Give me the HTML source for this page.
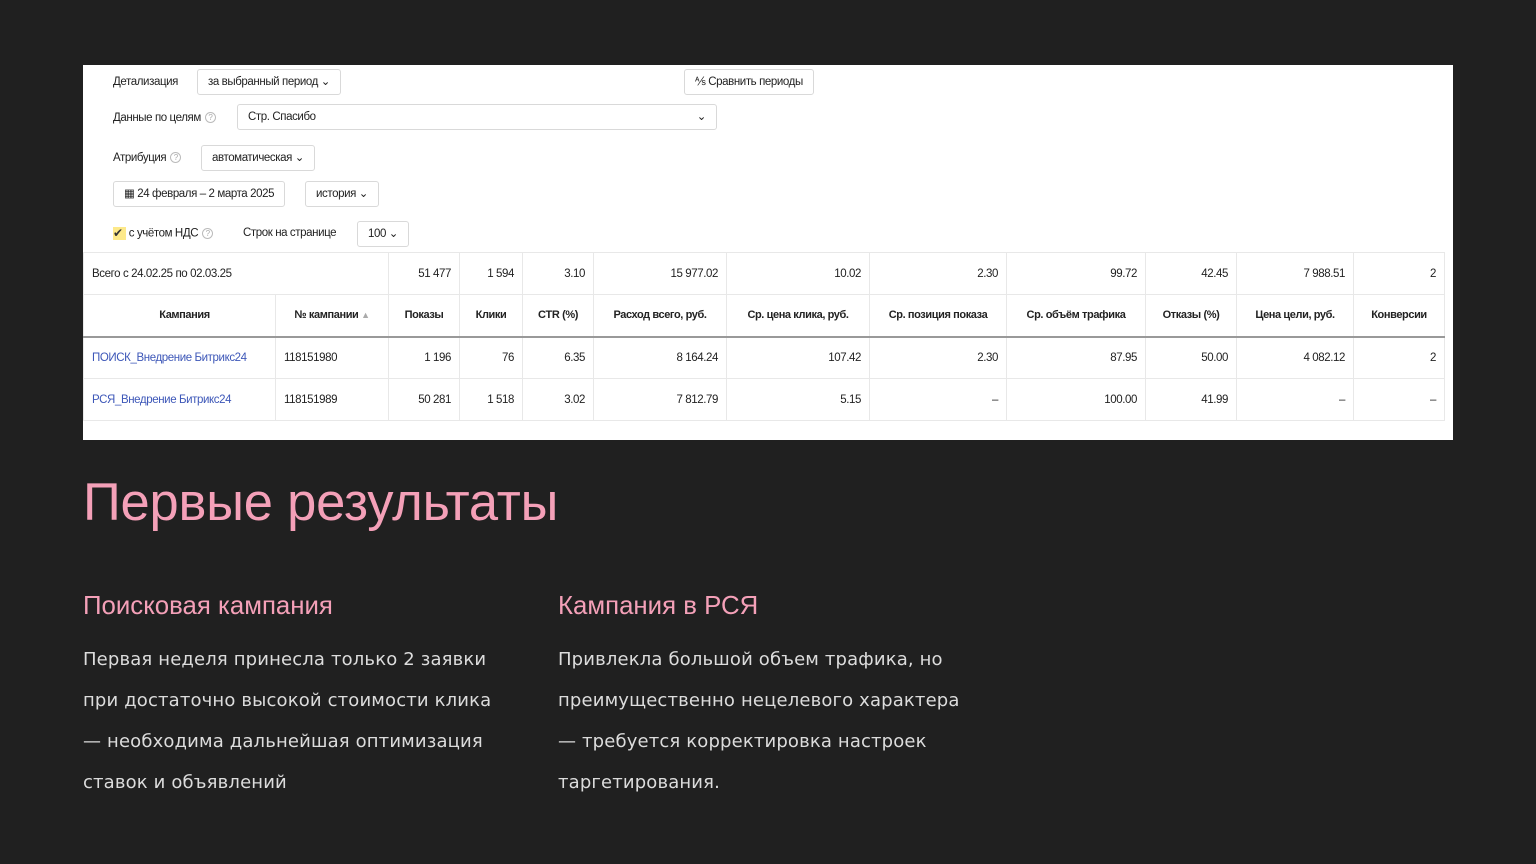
<!DOCTYPE html>
<html><head><meta charset="utf-8"><style>
*{margin:0;padding:0;box-sizing:border-box}
body{width:1536px;height:864px;background:#202020;position:relative;overflow:hidden;font-family:"Liberation Sans",sans-serif}
.shot{position:absolute;left:83px;top:65px;width:1370px;height:375px;background:#fff;font-family:"Liberation Sans",sans-serif;font-size:11.5px;letter-spacing:-0.4px;color:#222}
.a{position:absolute;white-space:nowrap}
.btn{position:absolute;border:1px solid #d9d9d9;border-radius:3px;height:26px;line-height:24px;padding:0 10px;white-space:nowrap;background:#fff}
.q{display:inline-block;width:11px;height:11px;border:1px solid #bbb;border-radius:50%;font-size:8px;line-height:9px;text-align:center;color:#aaa;vertical-align:middle;margin-left:4px}
table{position:absolute;left:0;top:187px;width:1361px;border-collapse:collapse;table-layout:fixed}
td{border:1px solid #e8e8e8;height:42px;padding:0 8px;text-align:right;white-space:nowrap;overflow:hidden}
tr.h td{font-weight:bold;text-align:center;border-bottom:2px solid #999;font-size:11px}
td.l{text-align:left}
.lnk{color:#3d57b8}
h1{position:absolute;left:83px;top:472px;font-weight:normal;font-size:52.5px;color:#f4a0b8;letter-spacing:-0.2px}
h2{position:absolute;top:592px;font-weight:normal;font-size:25.8px;color:#f4a0b8}
p{position:absolute;top:639px;font-family:"DejaVu Sans",sans-serif;font-size:18px;line-height:41px;color:#dcdcdc;letter-spacing:0.15px;white-space:nowrap}
</style></head><body>
<div class="shot">
 <div class="a" style="left:30px;top:11px">Детализация</div>
 <div class="btn" style="left:114px;top:4px">за выбранный период ⌄</div>
 <div class="btn" style="left:601px;top:4px">⅍ Сравнить периоды</div>
 <div class="a" style="left:30px;top:47px">Данные по целям<span class="q">?</span></div>
 <div class="btn" style="left:154px;top:39px;width:480px">Стр. Спасибо<span style="position:absolute;right:10px">⌄</span></div>
 <div class="a" style="left:30px;top:87px">Атрибуция<span class="q">?</span></div>
 <div class="btn" style="left:118px;top:80px">автоматическая ⌄</div>
 <div class="btn" style="left:30px;top:116px">▦ 24 февраля – 2 марта 2025</div>
 <div class="btn" style="left:222px;top:116px">история ⌄</div>
 <div class="a" style="left:30px;top:162px"><span style="display:inline-block;width:13px;height:13px;background:#fde98a;color:#333;font-size:12px;line-height:12px;vertical-align:middle">✔</span> с учётом НДС<span class="q">?</span></div>
 <div class="a" style="left:160px;top:162px">Строк на странице</div>
 <div class="btn" style="left:274px;top:156px">100 ⌄</div>
 <table>
  <colgroup><col style="width:192px"><col style="width:113px"><col style="width:71px"><col style="width:63px"><col style="width:71px"><col style="width:133px"><col style="width:143px"><col style="width:137px"><col style="width:139px"><col style="width:91px"><col style="width:117px"><col style="width:91px"></colgroup>
  <tr><td class="l" colspan="2">Всего с 24.02.25 по 02.03.25</td><td>51 477</td><td>1 594</td><td>3.10</td><td>15 977.02</td><td>10.02</td><td>2.30</td><td>99.72</td><td>42.45</td><td>7 988.51</td><td>2</td></tr>
  <tr class="h"><td class="l" style="padding-left:18px">Кампания</td><td>№ кампании <span style="color:#aaa;font-size:9px">▲</span></td><td>Показы</td><td>Клики</td><td>CTR (%)</td><td>Расход всего, руб.</td><td>Ср. цена клика, руб.</td><td>Ср. позиция показа</td><td>Ср. объём трафика</td><td>Отказы (%)</td><td>Цена цели, руб.</td><td>Конверсии</td></tr>
  <tr><td class="l lnk">ПОИСК_Внедрение Битрикс24</td><td class="l">118151980</td><td>1 196</td><td>76</td><td>6.35</td><td>8 164.24</td><td>107.42</td><td>2.30</td><td>87.95</td><td>50.00</td><td>4 082.12</td><td>2</td></tr>
  <tr><td class="l lnk">РСЯ_Внедрение Битрикс24</td><td class="l">118151989</td><td>50 281</td><td>1 518</td><td>3.02</td><td>7 812.79</td><td>5.15</td><td>–</td><td>100.00</td><td>41.99</td><td>–</td><td>–</td></tr>
 </table>
</div>
<h1>Первые результаты</h1>
<h2 style="left:83px">Поисковая кампания</h2>
<h2 style="left:558px">Кампания в РСЯ</h2>
<p style="left:83px">Первая неделя принесла только 2 заявки<br>при достаточно высокой стоимости клика<br>— необходима дальнейшая оптимизация<br>ставок и объявлений</p>
<p style="left:558px">Привлекла большой объем трафика, но<br>преимущественно нецелевого характера<br>— требуется корректировка настроек<br>таргетирования.</p>
</body></html>
